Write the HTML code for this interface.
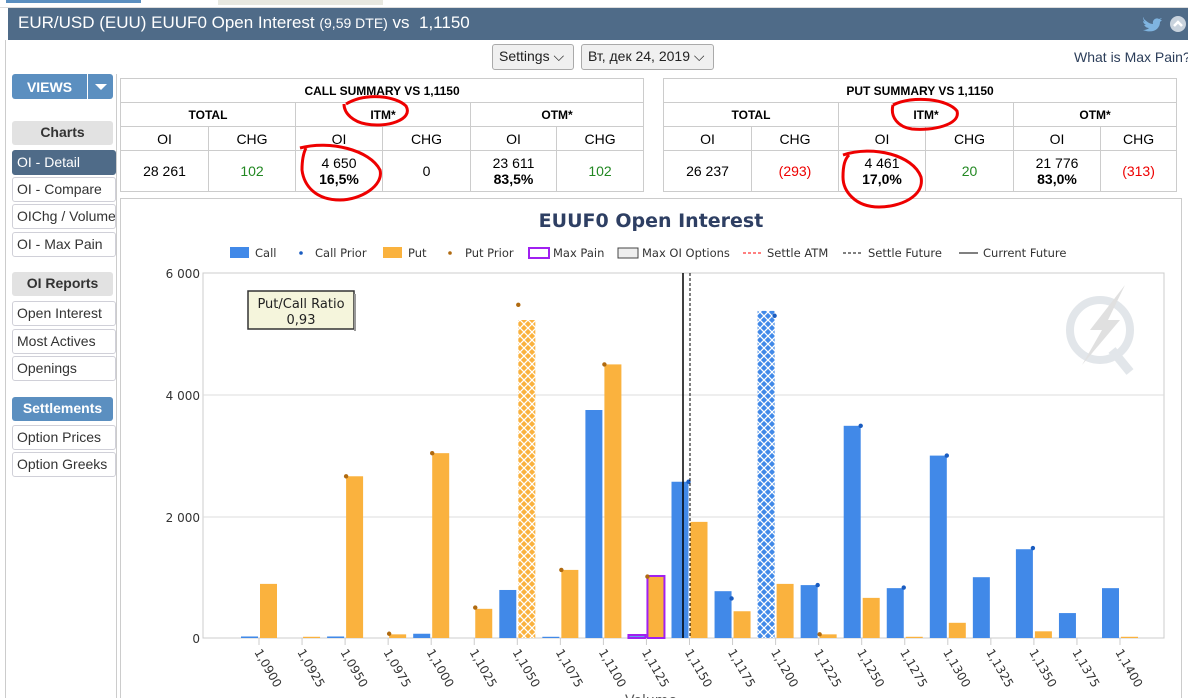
<!DOCTYPE html>
<html><head><meta charset="utf-8">
<style>
*{box-sizing:border-box;margin:0;padding:0}
body{width:1188px;height:698px;overflow:hidden;background:#fff;font-family:"Liberation Sans",Arial,sans-serif;position:relative}
.abs{position:absolute}
.hdr{left:8px;top:8px;width:1180px;height:32px;background:#4f6b88;color:#fff;font-size:17px;padding:5px 10px}
.btn{border:1px solid #aaa;border-radius:3px;background:#f0f0f0;font-size:14px;color:#222;padding:3px 6px;height:26px;white-space:nowrap}
.side{left:12px;width:104px;height:25px;font-size:14px;color:#333;border:1px solid #d0d0d8;border-radius:3px;padding:3px 4px;background:#fff;white-space:nowrap;overflow:hidden}
.sh{left:12px;width:101px;height:24px;font-size:14px;font-weight:bold;text-align:center;border-radius:3px;padding:3px}
table{border-collapse:collapse;position:absolute;font-size:14px;table-layout:fixed}
td{border:1px solid #ccc;text-align:center;height:24px;padding:0}
.b{font-weight:bold;font-size:12px}
.g{color:#228822}.r{color:#e00}
</style></head><body>
<div class="abs" style="left:0;top:0;width:1188px;height:8px;background:#fff;border-bottom:1px solid #ddd"></div>
<div class="abs" style="left:6px;top:0;width:135px;height:3px;background:#5b8fc0"></div>
<div class="abs" style="left:218px;top:0;width:165px;height:5px;background:#e8e8e0"></div>
<div class="abs" style="left:5px;top:40px;width:1px;height:658px;background:#ccc"></div>
<div class="abs hdr">EUR/USD (EUU) EUUF0 Open Interest <span style="font-size:14px">(9,59 DTE)</span> vs&nbsp; 1,1150</div>
<svg class="abs" style="left:1142px;top:15px" width="44" height="18"><path d="M2 4c3 3 6 5 9 5-1-4 3-7 6-5l3-1-2 2 2 0-2 2c0 7-7 12-17 8 3 0 5-1 6-2-3 0-4-2-5-3h2c-2-1-3-3-3-4l2 1c-2-2-2-4-1-5z" fill="#7fb4e0"/><circle cx="36" cy="9" r="8" fill="#c9d3dd"/><path d="M32 11l4-4 4 4" stroke="#fff" stroke-width="2.5" fill="none"/></svg>
<div class="abs btn" style="left:492px;top:44px;width:82px">Settings ⌵</div>
<div class="abs btn" style="left:581px;top:44px;width:133px">Вт, дек 24, 2019 ⌵</div>
<div class="abs" style="left:1074px;top:49px;font-size:14px;color:#2c3e5a;white-space:nowrap">What is Max Pain?</div>
<div class="abs" style="left:12px;top:74px;width:75px;height:25px;background:#5b8fc0;color:#fff;font-weight:bold;font-size:14px;text-align:center;padding-top:5px;border-radius:3px 0 0 3px">VIEWS</div>
<div class="abs" style="left:88px;top:74px;width:25px;height:25px;background:#5b8fc0;border-radius:0 3px 3px 0"><div style="margin:10px auto 0;width:0;height:0;border-left:6px solid transparent;border-right:6px solid transparent;border-top:6px solid #fff"></div></div>
<div class="abs" style="left:116px;top:74px;width:1px;height:624px;background:#ccc"></div>
<div class="abs sh" style="top:121px;background:#e2e2e2;color:#333">Charts</div>
<div class="abs side" style="top:150px;background:#4f6b88;color:#fff;border-color:#4f6b88">OI - Detail</div>
<div class="abs side" style="top:177px">OI - Compare</div>
<div class="abs side" style="top:204px">OIChg / Volume</div>
<div class="abs side" style="top:232px">OI - Max Pain</div>
<div class="abs sh" style="top:272px;background:#e2e2e2;color:#333">OI Reports</div>
<div class="abs side" style="top:301px">Open Interest</div>
<div class="abs side" style="top:329px">Most Actives</div>
<div class="abs side" style="top:356px">Openings</div>
<div class="abs sh" style="top:397px;background:#5b8fc0;color:#fff">Settlements</div>
<div class="abs side" style="top:425px">Option Prices</div>
<div class="abs side" style="top:452px">Option Greeks</div>

<table style="left:120px;top:78px;width:523px">
<colgroup><col style="width:88px"><col style="width:87px"><col style="width:87px"><col style="width:88px"><col style="width:86px"><col style="width:87px"></colgroup>
<tr><td colspan="6" class="b">CALL SUMMARY VS 1,1150</td></tr>
<tr><td colspan="2" class="b">TOTAL</td><td colspan="2" class="b">ITM*</td><td colspan="2" class="b">OTM*</td></tr>
<tr><td>OI</td><td>CHG</td><td>OI</td><td>CHG</td><td>OI</td><td>CHG</td></tr>
<tr style="height:41px"><td>28 261</td><td class="g">102</td><td>4 650<br><b>16,5%</b></td><td>0</td><td>23 611<br><b>83,5%</b></td><td class="g">102</td></tr>
</table>
<table style="left:663px;top:78px;width:513px">
<colgroup><col style="width:88px"><col style="width:87px"><col style="width:87px"><col style="width:88px"><col style="width:87px"><col style="width:76px"></colgroup>
<tr><td colspan="6" class="b">PUT SUMMARY VS 1,1150</td></tr>
<tr><td colspan="2" class="b">TOTAL</td><td colspan="2" class="b">ITM*</td><td colspan="2" class="b">OTM*</td></tr>
<tr><td>OI</td><td>CHG</td><td>OI</td><td>CHG</td><td>OI</td><td>CHG</td></tr>
<tr style="height:41px"><td>26 237</td><td class="r">(293)</td><td>4 461<br><b>17,0%</b></td><td class="g">20</td><td>21 776<br><b>83,0%</b></td><td class="r">(313)</td></tr>
</table>

<div class="abs" style="left:120px;top:198px;width:1062px;height:500px;border:1px solid #ccc;border-bottom:none"></div>
<svg id="ch" class="abs" style="left:0;top:0" width="1188" height="698" font-family="'DejaVu Sans',sans-serif">
<defs>
<pattern id="ho" width="8" height="8" patternUnits="userSpaceOnUse"><rect width="8" height="8" fill="#fab23e"/><path d="M0 0L8 8M8 0L0 8" stroke="#fff" stroke-width="1.3"/></pattern>
<pattern id="hc" width="8" height="8" patternUnits="userSpaceOnUse"><rect width="8" height="8" fill="#4189e8"/><path d="M0 0L8 8M8 0L0 8" stroke="#fff" stroke-width="1.3"/></pattern>
</defs>
<text x="651" y="227" text-anchor="middle" font-size="19" font-weight="bold" fill="#2e3f63">EUUF0 Open Interest</text>
<g font-size="11.5" fill="#333">
<rect x="230" y="247" width="19" height="11" fill="#4189e8"/><text x="255" y="257">Call</text>
<circle cx="301" cy="253" r="1.8" fill="#1a5cc0"/><text x="315" y="257">Call Prior</text>
<rect x="383" y="247" width="19" height="11" fill="#fab23e"/><text x="408" y="257">Put</text>
<circle cx="450" cy="253" r="1.8" fill="#b06a10"/><text x="465" y="257">Put Prior</text>
<rect x="529" y="248" width="20" height="10" fill="none" stroke="#a020f0" stroke-width="2"/><text x="553" y="257">Max Pain</text>
<rect x="618" y="248" width="20" height="10" fill="#eee" stroke="#444"/><text x="642" y="257">Max OI Options</text>
<line x1="743" y1="253" x2="762" y2="253" stroke="red" stroke-dasharray="3,2"/><text x="767" y="257">Settle ATM</text>
<line x1="843" y1="253" x2="862" y2="253" stroke="#000" stroke-dasharray="3,2"/><text x="868" y="257">Settle Future</text>
<line x1="959" y1="253" x2="978" y2="253" stroke="#000"/><text x="983" y="257">Current Future</text>
</g>
<rect x="203" y="273" width="961" height="365" fill="none" stroke="#ccc"/>
<line x1="203" y1="395" x2="1164" y2="395" stroke="#ddd"/>
<line x1="203" y1="517" x2="1164" y2="517" stroke="#ddd"/>
<g font-size="12" fill="#333" text-anchor="end"><text x="200" y="278">6 000</text><text x="200" y="400">4 000</text><text x="200" y="522">2 000</text><text x="200" y="643">0</text></g>
<g fill="none" stroke="#e2e6ea"><circle cx="1100" cy="330" r="30" stroke-width="8"/><path d="M1112 350l18 22" stroke-width="9"/></g>
<path d="M1125 285l-35 45h12l-20 35 38-45h-12z" fill="#e0e0e0"/>
<g id="bars"></g>
<line x1="683" y1="273" x2="683" y2="638" stroke="#000" stroke-width="1.5"/>
<line x1="690" y1="273" x2="690" y2="638" stroke="#000" stroke-dasharray="3,2"/>
<rect x="248" y="291" width="106" height="38" fill="#f5f5dc" stroke="#333" stroke-width="1.5"/>
<rect x="354" y="294" width="2" height="37" fill="#999"/>
<text x="301" y="308" text-anchor="middle" font-size="13" fill="#222">Put/Call Ratio</text>
<text x="301" y="324" text-anchor="middle" font-size="13" fill="#222">0,93</text>
<text x="651" y="705" text-anchor="middle" font-size="14" fill="#555">Volume</text>
<g fill="none" stroke="#e00" stroke-width="3">
<path d="M346 104c20-12 50-8 60 2 8 14-20 22-40 18-12-2-22-10-22-20"/>
<path d="M300 148c30-8 70 2 80 22 4 16-20 30-40 30-24 0-36-14-38-30 0-10 2-18 4-22"/>
<path d="M893 105c20-10 55-6 64 6 4 14-25 20-45 18-14-2-22-12-19-24"/>
<path d="M843 155c30-10 70 0 78 22 4 20-22 30-42 30-24 0-36-16-36-30 0-12 2-18 6-22"/>
</g>
</svg>
<script>
var c=[25,0,25,0,70,0,790,20,3750,30,2570,770,5380,870,3490,820,3000,1000,1460,410,820];
var p=[890,20,2660,60,3040,480,5230,1120,4500,1020,1910,440,890,60,660,20,250,0,110,0,20];
var cp=[0,0,0,0,0,0,0,0,0,0,2570,650,5300,870,3490,830,3000,0,1480,0,0];
var pp=[0,0,2660,70,3040,500,5480,1120,4500,1010,0,0,0,60,0,0,0,0,0,0,0];
var lab=["1,0900","1,0925","1,0950","1,0975","1,1000","1,1025","1,1050","1,1075","1,1100","1,1125","1,1150","1,1175","1,1200","1,1225","1,1250","1,1275","1,1300","1,1325","1,1350","1,1375","1,1400"];
var s="",k=0.0608;
function Y(v){return 638-v*k}
for(var i=0;i<21;i++){var x=259+43.05*i;
if(c[i]>0)s+='<rect x="'+(x-18)+'" y="'+Y(c[i])+'" width="17" height="'+(c[i]*k)+'" fill="'+(i==12?'url(#hc)':'#4189e8')+'"/>';
if(p[i]>0)s+='<rect x="'+(x+1)+'" y="'+Y(p[i])+'" width="17" height="'+(p[i]*k)+'" fill="'+(i==6?'url(#ho)':'#fab23e')+'"'+(i==9?' stroke="#a020f0" stroke-width="2"':'')+'/>';
if(i==9)s+='<rect x="'+(x-18)+'" y="635" width="17" height="3" fill="none" stroke="#a020f0" stroke-width="2"/>';
if(cp[i])s+='<circle cx="'+(x-1)+'" cy="'+Y(cp[i])+'" r="2.2" fill="#1a5cc0"/>';
if(pp[i])s+='<circle cx="'+(x+1)+'" cy="'+Y(pp[i])+'" r="2.2" fill="#b06a10"/>';
s+='<line x1="'+x+'" y1="638" x2="'+x+'" y2="645" stroke="#ccc"/>';
s+='<text transform="translate('+(x-5)+',652) rotate(60)" font-size="12" fill="#333">'+lab[i]+'</text>';}
document.getElementById("bars").innerHTML=s;
</script>
</body></html>
